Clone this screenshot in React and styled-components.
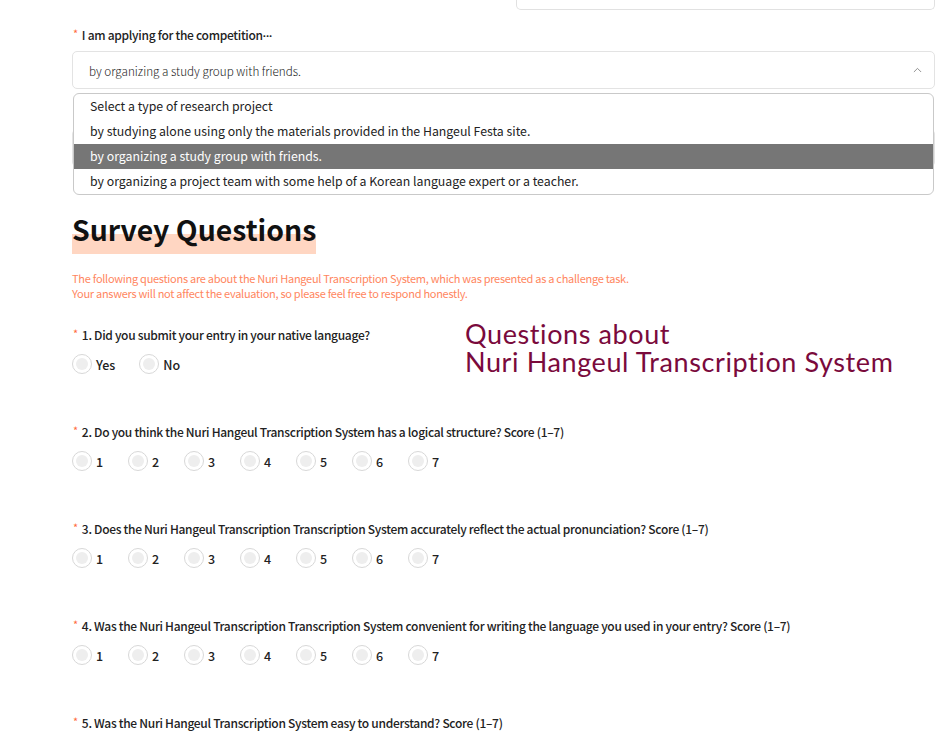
import React from 'react';
import styled, { createGlobalStyle } from 'styled-components';

const GlobalStyle = createGlobalStyle`
  html, body {
    margin: 0;
    padding: 0;
    background: #fff;
  }
  body {
    font-family: "Noto Sans CJK KR", "Noto Sans", sans-serif;
    color: #222;
  }
`;

const projectTypes = [
  'Select a type of research project',
  'by studying alone using only the materials provided in the Hangeul Festa site.',
  'by organizing a study group with friends.',
  'by organizing a project team with some help of a Korean language expert or a teacher.',
];

const scoreQuestions = [
  '2. Do you think the Nuri Hangeul Transcription System has a logical structure? Score (1–7)',
  '3. Does the Nuri Hangeul Transcription Transcription System accurately reflect the actual pronunciation? Score (1–7)',
  '4. Was the Nuri Hangeul Transcription Transcription System convenient for writing the language you used in your entry? Score (1–7)',
  '5. Was the Nuri Hangeul Transcription System easy to understand? Score (1–7)',
];

const App = () => {
  return (
    <>
      <GlobalStyle />
      <Page>
        <TopRow>
          <span />
          <CutBox />
        </TopRow>

        <Field>
          <Label><Star>*</Star>I am applying for the competition<Dots>···</Dots></Label>
          <SelectWrap>
            <SelectBox>
              <SelectValue>by organizing a study group with friends.</SelectValue>
              <Chevron viewBox="0 0 10 6">
                <path d="M1 5.2 5 1.2 9 5.2" fill="none" stroke="#777" strokeWidth="0.9" />
              </Chevron>
            </SelectBox>
            <Menu>
              {projectTypes.map((item, i) => (
                <MenuItem key={item} active={i === 2}>{item}</MenuItem>
              ))}
            </Menu>
          </SelectWrap>
        </Field>

        <Field>
          <Label><Star>*</Star>Type of research project</Label>
          <SelectBox>
            <SelectValue>Select a type of research project</SelectValue>
          </SelectBox>
        </Field>

        <Heading><span>Survey Questions</span></Heading>
        <Notice>
          The following questions are about the Nuri Hangeul Transcription System, which was presented as a challenge task.
          <br />
          Your answers will not affect the evaluation, so please feel free to respond honestly.
        </Notice>

        <IntroRow>
          <Question>
            <QLabel><Star>*</Star>1. Did you submit your entry in your native language?</QLabel>
            <Options>
              <Radio text="Yes" />
              <Radio text="No" />
            </Options>
          </Question>
          <SideTitle>
            Questions about
            <br />
            Nuri Hangeul Transcription System
          </SideTitle>
        </IntroRow>

        {scoreQuestions.map((q, i) => (
          <Question key={q}>
            <QLabel><Star>*</Star>{q}</QLabel>
            {i < 3 && (
              <Options>
                {[1, 2, 3, 4, 5, 6, 7].map(n => (
                  <Radio key={n} text={n} />
                ))}
              </Options>
            )}
          </Question>
        ))}
      </Page>
    </>
  );
};

const Radio = ({ text }) => (
  <Option>
    <Circle><Dot /></Circle>
    <OptionText>{text}</OptionText>
  </Option>
);

export default App;

const Page = styled.div`
  padding: 0 12px 40px 72px;
`;

const TopRow = styled.div`
  display: grid;
  grid-template-columns: 1fr 1fr;
  column-gap: 24px;
`;

const CutBox = styled.div`
  height: 9px;
  border: 1px solid #e1e1e1;
  border-top: none;
  border-radius: 0 0 5px 5px;
`;

const Field = styled.div`
  margin-top: 16px;
`;

const Label = styled.div`
  font-size: 12px;
  line-height: 18px;
  font-weight: 500;
  letter-spacing: -0.3px;
  color: #222;
  padding-left: 1px;
`;

const Dots = styled.span`
  font-family: Lato, sans-serif;
  letter-spacing: 0;
`;

const Star = styled.span`
  color: #ff6a3d;
  font-size: 11px;
  font-weight: 400;
  margin-right: 4px;
  position: relative;
  top: -2px;
`;

const SelectWrap = styled.div`
  position: relative;
`;

const SelectBox = styled.div`
  margin-top: 6px;
  height: 38px;
  box-sizing: border-box;
  border: 1px solid #e3e3e3;
  border-radius: 5px;
  display: flex;
  align-items: center;
  justify-content: space-between;
  padding: 0 12px 0 16px;
`;

const SelectValue = styled.span`
  font-size: 11.7px;
  font-weight: 300;
  color: #222;
`;

const Chevron = styled.svg`
  width: 9px;
  height: 6px;
`;

const Menu = styled.ul`
  position: absolute;
  top: 42px;
  left: 1px;
  right: 1px;
  margin: 0;
  padding: 0;
  list-style: none;
  background: #fff;
  border: 1px solid #c9c9c9;
  border-radius: 6px;
  overflow: hidden;
  z-index: 2;
`;

const MenuItem = styled.li`
  height: 25px;
  line-height: 25px;
  padding-left: 16px;
  font-size: 12.3px;
  color: ${p => (p.active ? '#fff' : '#222')};
  background: ${p => (p.active ? '#767676' : 'transparent')};
`;

const Heading = styled.h2`
  margin: 47px 0 0;
  font-size: 28.4px;
  line-height: 30px;
  font-weight: 700;
  color: #111;
  & span {
    display: inline-block;
    padding-bottom: 10px;
    background: linear-gradient(transparent 50%, #ffd6c2 50%);
  }
`;

const Notice = styled.p`
  margin: 17px 0 0;
  font-size: 11px;
  line-height: 15px;
  color: #ff8660;
  letter-spacing: -0.28px;
`;

const IntroRow = styled.div`
  display: grid;
  grid-template-columns: 393px 1fr;
  align-items: start;
  margin-top: 25px;
`;

const Question = styled.div`
  & + & {
    margin-top: 49px;
  }
  ${IntroRow} + & {
    margin-top: 47px;
  }
`;

const QLabel = styled.div`
  font-size: 12px;
  line-height: 18px;
  font-weight: 500;
  letter-spacing: -0.3px;
  color: #222;
  padding-left: 1px;
`;

const Options = styled.div`
  display: flex;
  gap: 24px;
  margin-top: 10px;
`;

const Option = styled.label`
  display: flex;
  align-items: center;
  gap: 4px;
`;

const Circle = styled.span`
  width: 20px;
  height: 20px;
  box-sizing: border-box;
  border: 1px solid #d8d8d8;
  border-radius: 50%;
  display: flex;
  align-items: center;
  justify-content: center;
`;

const Dot = styled.span`
  width: 12px;
  height: 12px;
  border-radius: 50%;
  background: #eeeeee;
`;

const OptionText = styled.span`
  font-size: 12.5px;
  font-weight: 500;
  color: #222;
  min-width: 8px;
`;

const SideTitle = styled.div`
  margin-top: -6px;
  font-family: Lato, "Noto Sans", sans-serif;
  font-size: 27px;
  line-height: 28px;
  letter-spacing: 0.6px;
  color: #7a0a3c;
`;
